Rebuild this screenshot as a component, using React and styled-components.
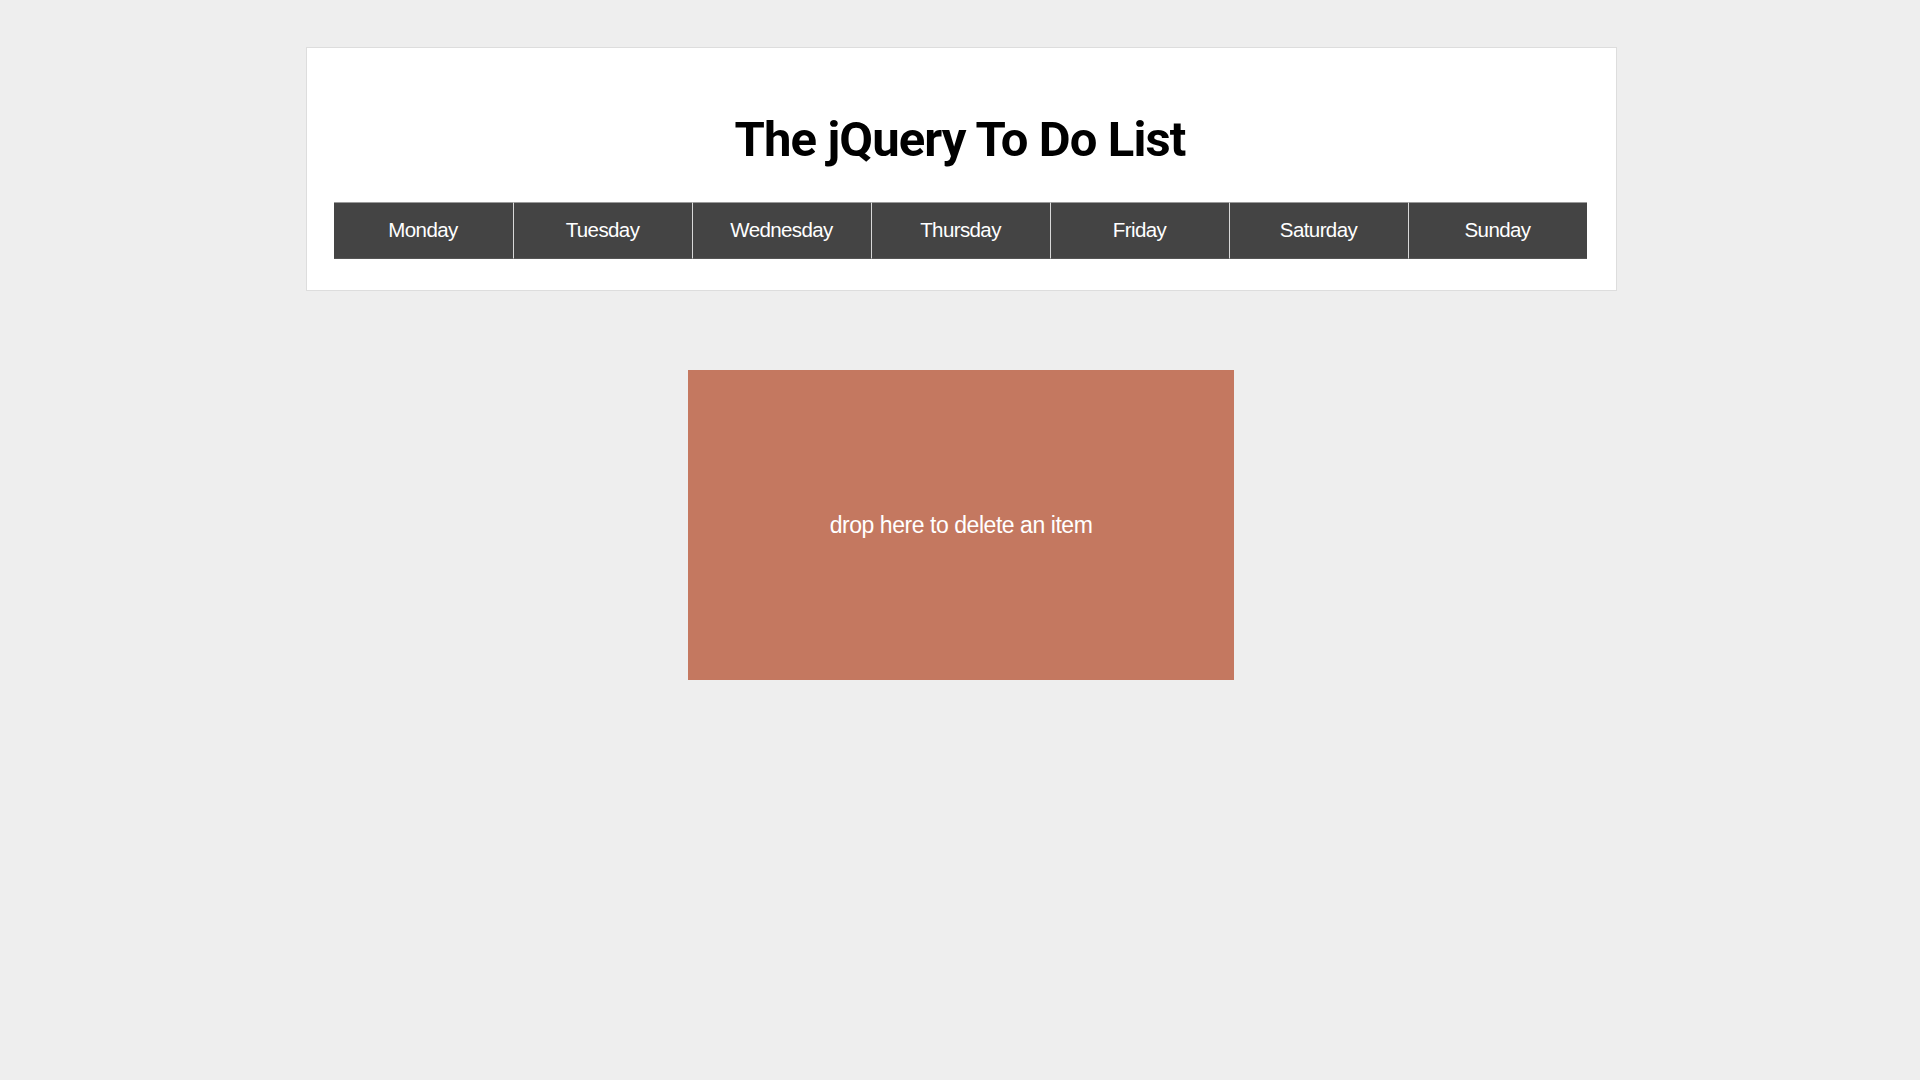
import React from "react";
import styled, { createGlobalStyle } from "styled-components";

const Global = createGlobalStyle`
  html, body { margin: 0; padding: 0; background: #eeeeee; }
  body { font-family: "Liberation Sans", Arial, sans-serif; }
`;

const Page = styled.div`
  display: flex;
  flex-direction: column;
  align-items: center;
  padding: 47px 0 0 2px;
  min-height: 100vh;
  box-sizing: border-box;
`;

const Card = styled.header`
  width: 1311px;
  box-sizing: border-box;
  background: #ffffff;
  border: 1px solid #dddddd;
  padding: 0 29px 31px 27px;
  display: flex;
  flex-direction: column;
`;

const Title = styled.h1`
  margin: 0;
  padding: 64px 0 34px;
  font-family: Roboto, "Liberation Sans", Arial, sans-serif;
  font-weight: 700;
  font-size: 49px;
  line-height: 56px;
  letter-spacing: -0.9px;
  text-align: center;
  color: #000;
`;

const Tabs = styled.ul`
  list-style: none;
  margin: 0;
  padding: 0;
  display: grid;
  grid-template-columns: repeat(7, 1fr);
  height: 57px;
`;

const Tab = styled.li`
  display: flex;
  align-items: center;
  justify-content: center;
  padding-bottom: 2px;
  background: #444444;
  color: #ffffff;
  font-size: 20.5px;
  letter-spacing: -0.6px;
  border-top: 1px solid #9a9a9a;
  border-bottom: 1px solid #555;
  border-left: ${(p) => (p.$first ? "none" : "1px solid #d8d8d8")};
  box-sizing: border-box;
  cursor: pointer;
`;

const DropZone = styled.div`
  margin-top: 79px;
  width: 546px;
  height: 310px;
  background: #c47860;
  display: flex;
  align-items: center;
  justify-content: center;
  color: #ffffff;
  font-size: 23px;
  letter-spacing: -0.45px;
`;

const days = ["Monday", "Tuesday", "Wednesday", "Thursday", "Friday", "Saturday", "Sunday"];

export default function App() {
  return (
    <>
      <Global />
      <Page>
        <Card>
          <Title>The jQuery To Do List</Title>
          <Tabs>
            {days.map((d, i) => (
              <Tab key={d} $first={i === 0}>
                {d}
              </Tab>
            ))}
          </Tabs>
        </Card>
        <DropZone>drop here to delete an item</DropZone>
      </Page>
    </>
  );
}
